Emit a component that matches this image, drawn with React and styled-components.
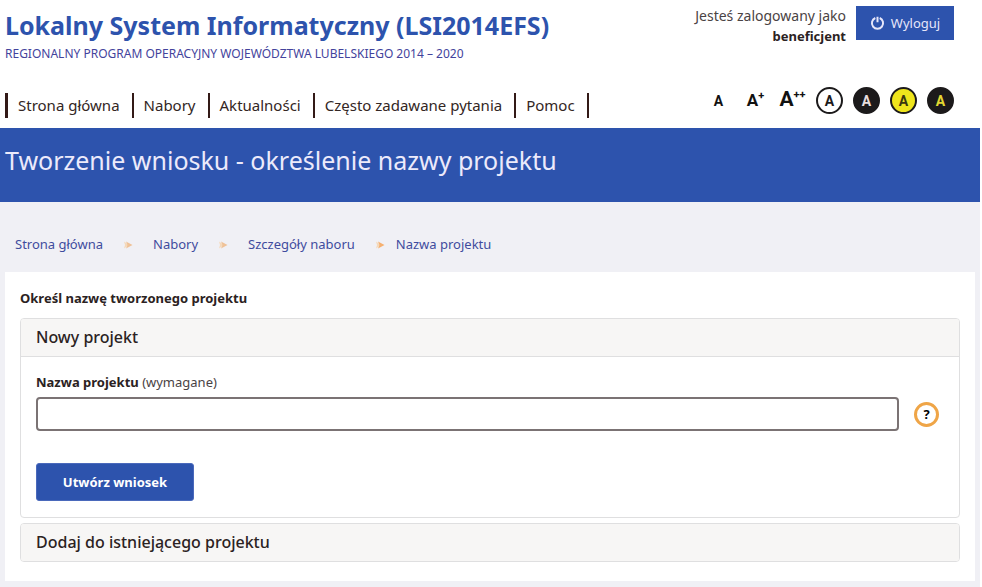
import React from "react"
import styled, { createGlobalStyle } from "styled-components"

const blue = "#2d53ad"
const linkBlue = "#3f4c9e"

const GlobalStyle = createGlobalStyle`
  * {
    box-sizing: border-box;
  }
  body {
    margin: 0;
    background: #fff;
    color: #2b2222;
    font-family: "Noto Sans", "Open Sans", sans-serif;
    font-size: 13px;
    line-height: 20px;
  }
  button,
  input {
    font-family: inherit;
  }
`

const Page = styled.div`
  margin-right: 2px;
`

const Header = styled.header`
  display: flex;
  justify-content: space-between;
  height: 128px;
  padding: 6px 26px 0 5px;
`

const HeaderColumn = styled.div`
  display: flex;
  flex-direction: column;
  justify-content: space-between;
  align-items: ${props => props.$align || "flex-start"};
  padding-bottom: ${props => props.$bottom};
`

const SiteTitle = styled.h1`
  margin: 0;
  color: ${blue};
  font-size: 25px;
  line-height: 38px;
  white-space: nowrap;
`

const SiteSubtitle = styled.p`
  margin: 0;
  color: #43439c;
  font-size: 12px;
  text-transform: uppercase;
  white-space: nowrap;
`

const Menu = styled.ul`
  display: flex;
  margin: 0;
  padding: 0;
  border-left: 3px solid #331a17;
  list-style: none;
`

const MenuItem = styled.li`
  padding: 0 12px 0 10px;
  border-right: 2px solid #331a17;
`

const MenuLink = styled.a`
  color: #332624;
  font-size: 15px;
  line-height: 25px;
  text-decoration: none;
  white-space: nowrap;
`

const Account = styled.div`
  display: flex;
  gap: 10px;
`

const LoggedAs = styled.p`
  margin: 0;
  color: #4a4344;
  font-size: 14px;
  text-align: right;
  white-space: nowrap;

  strong {
    display: block;
    color: #2b2222;
    font-size: 13px;
  }
`

const Logout = styled.button`
  display: flex;
  align-items: center;
  justify-content: center;
  gap: 6px;
  width: 98px;
  height: 34px;
  padding: 0;
  border: 0;
  background: ${blue};
  color: #e6e6fa;
  font-size: 13px;
`

const Tools = styled.div`
  display: grid;
  grid-template-columns: repeat(7, 27px);
  align-items: baseline;
  gap: 10px;
`

const SizeButton = styled.button`
  padding: 0;
  border: 0;
  background: none;
  color: #111;
  font-family: Roboto, sans-serif;
  font-size: ${props => props.$size};
  font-weight: 700;
  white-space: nowrap;

  sup {
    font-size: 11px;
    line-height: 0;
  }
`

const ContrastButton = styled.button`
  height: 27px;
  padding: 0;
  border: 2px solid #1c1a1b;
  border-radius: 50%;
  background: ${props => props.$bg};
  color: ${props => props.$fg};
  font-family: Roboto, sans-serif;
  font-size: 14px;
  font-weight: 700;
`

const Banner = styled.div`
  height: 74px;
  padding: 14px 5px;
  background: ${blue};
`

const BannerTitle = styled.h2`
  margin: 0;
  color: #eceafb;
  font-size: 25px;
  font-weight: 400;
  line-height: 36px;
`

const Content = styled.main`
  padding: 32px 5px 6px;
  background: #f0f0f5;
`

const Breadcrumbs = styled.nav`
  display: flex;
  align-items: center;
  padding: 0 10px;
  margin-bottom: 18px;
`

const Crumb = styled.a`
  color: ${linkBlue};
  font-size: 13px;
  text-decoration: none;
`

const Separator = styled.svg`
  margin: 2px ${props => (props.$last ? "11px" : "20px")} 0 20px;
`

const Panel = styled.section`
  padding: 16px 15px 19px;
  background: #fff;
`

const PanelTitle = styled.h3`
  margin: 0 0 10px;
  font-size: 13px;
`

const Card = styled.div`
  margin-top: 5px;
  border: 1px solid #dfdfe0;
  border-radius: 4px;
  overflow: hidden;
`

const CardTitle = styled.h4`
  margin: 0;
  padding: 0 15px;
  background: #f7f6f5;
  font-size: 16px;
  font-weight: 500;
  line-height: 37px;
`

const Form = styled.form`
  padding: 15px 15px 16px;
  border-top: 1px solid #dfdfe0;
`

const Label = styled.label`
  display: block;
  margin-bottom: 5px;
  font-weight: 700;

  span {
    color: #4a4344;
    font-weight: 400;
  }
`

const FieldRow = styled.div`
  display: flex;
  align-items: center;
  gap: 15px;
  padding-right: 5px;
  margin-bottom: 32px;
`

const TextInput = styled.input`
  flex: 1;
  height: 34px;
  padding: 0 10px;
  border: 2px solid #7b7374;
  border-radius: 4px;
  background: #fff;
  font-size: 14px;
`

const Help = styled.button`
  width: 25px;
  height: 25px;
  padding: 0;
  border: 3px solid #efa547;
  border-radius: 50%;
  background: #fff;
  color: #000;
  font-size: 13px;
  font-weight: 700;
  line-height: 18px;
`

const Submit = styled.button`
  display: block;
  width: 158px;
  height: 38px;
  padding: 0;
  border: 1px solid #4a69bb;
  border-radius: 3px;
  background: ${blue};
  color: #fff;
  font-size: 13px;
  font-weight: 700;
`

const PowerIcon = () => (
  <svg width="15" height="15" viewBox="0 0 15 15" fill="none" stroke="currentColor" strokeWidth="2">
    <path d="M5.3 2a5.6 5.6 0 1 0 4.4 0M7.5 0.8v5.4" />
  </svg>
)

const Chevrons = ({ last }) => (
  <Separator $last={last} width="10" height="8" viewBox="0 0 10 8" aria-hidden="true">
    <path d="M1 0.5L6 4L1 7.5L2 4Z" fill="#f5d9bb" />
    <path d="M3 0.5L9.5 4L3 7.5L4.5 4Z" fill={last ? "#f5b070" : "#efc298"} />
  </Separator>
)

const menu = ["Strona główna", "Nabory", "Aktualności", "Często zadawane pytania", "Pomoc"]

const crumbs = ["Strona główna", "Nabory", "Szczegóły naboru", "Nazwa projektu"]

const sizes = [
  { label: "Mała czcionka", size: "14px", plus: "" },
  { label: "Średnia czcionka", size: "17px", plus: "+" },
  { label: "Duża czcionka", size: "21px", plus: "++" },
]

const contrasts = [
  { label: "Czarny na białym", bg: "#fff", fg: "#1c1a1b" },
  { label: "Biały na czarnym", bg: "#1c1a1b", fg: "#e8dede" },
  { label: "Czarny na żółtym", bg: "#efe51c", fg: "#3a3710" },
  { label: "Żółty na czarnym", bg: "#1c1a1b", fg: "#e3d832" },
]

const App = () => {
  return (
    <>
      <GlobalStyle />
      <Page>
        <Header>
          <HeaderColumn $bottom="10px">
            <div>
              <SiteTitle>Lokalny System Informatyczny (LSI2014EFS)</SiteTitle>
              <SiteSubtitle>Regionalny Program Operacyjny Województwa Lubelskiego 2014 – 2020</SiteSubtitle>
            </div>
            <Menu>
              {menu.map(item => (
                <MenuItem key={item}>
                  <MenuLink href="#">{item}</MenuLink>
                </MenuItem>
              ))}
            </Menu>
          </HeaderColumn>
          <HeaderColumn $align="flex-end" $bottom="14px">
            <Account>
              <LoggedAs>
                Jesteś zalogowany jako <strong>beneficjent</strong>
              </LoggedAs>
              <Logout type="button">
                <PowerIcon />
                Wyloguj
              </Logout>
            </Account>
            <Tools>
              {sizes.map(({ label, size, plus }) => (
                <SizeButton key={label} type="button" aria-label={label} $size={size}>
                  A{plus && <sup>{plus}</sup>}
                </SizeButton>
              ))}
              {contrasts.map(({ label, bg, fg }) => (
                <ContrastButton key={label} type="button" aria-label={label} $bg={bg} $fg={fg}>
                  A
                </ContrastButton>
              ))}
            </Tools>
          </HeaderColumn>
        </Header>
        <Banner>
          <BannerTitle>Tworzenie wniosku - określenie nazwy projektu</BannerTitle>
        </Banner>
        <Content>
          <Breadcrumbs>
            {crumbs.map((crumb, i) => (
              <React.Fragment key={crumb}>
                {i > 0 && <Chevrons last={i === crumbs.length - 1} />}
                <Crumb href="#">{crumb}</Crumb>
              </React.Fragment>
            ))}
          </Breadcrumbs>
          <Panel>
            <PanelTitle>Określ nazwę tworzonego projektu</PanelTitle>
            <Card>
              <CardTitle>Nowy projekt</CardTitle>
              <Form>
                <Label htmlFor="project-name">
                  Nazwa projektu <span>(wymagane)</span>
                </Label>
                <FieldRow>
                  <TextInput id="project-name" type="text" required />
                  <Help type="button" aria-label="Pomoc">
                    ?
                  </Help>
                </FieldRow>
                <Submit type="submit">Utwórz wniosek</Submit>
              </Form>
            </Card>
            <Card>
              <CardTitle>Dodaj do istniejącego projektu</CardTitle>
            </Card>
          </Panel>
        </Content>
      </Page>
    </>
  )
}

export default App
